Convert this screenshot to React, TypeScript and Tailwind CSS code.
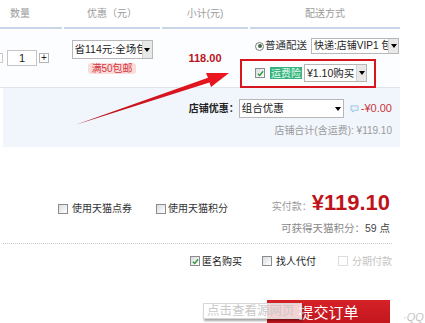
import React from "react";

// drop-down arrow on the right side of a select
function Caret({ plain }: { plain?: boolean }) {
  return (
    <span
      className={`flex w-[10px] shrink-0 items-center justify-center self-stretch ${
        plain ? "bg-white" : "border-l border-[#d2d2d2] bg-[#e8e8e8]"
      }`}
    >
      <span className="h-0 w-0 border-x-[3.5px] border-t-[4px] border-x-transparent border-t-black" />
    </span>
  );
}

function Select({ label, className, plain }: { label: string; className: string; plain?: boolean }) {
  return (
    <div className={`flex items-stretch border border-[#b7b7b7] bg-white ${className}`}>
      <span className="flex min-w-0 flex-1 items-center overflow-hidden whitespace-nowrap pl-[2px] leading-none text-[#222]">
        {label}
      </span>
      <Caret plain={plain} />
    </div>
  );
}

function Box({ checked, faded }: { checked?: boolean; faded?: boolean }) {
  return (
    <span
      className={`flex h-[10px] w-[10px] shrink-0 items-center justify-center border ${
        faded ? "border-[#dcdcdc] bg-white" : "border-[#8c8c8c] bg-linear-to-br from-[#d9dde2] to-white"
      }`}
    >
      {checked && (
        <svg viewBox="0 0 8 8" className="h-[7px] w-[7px]">
          <path d="M1 4.2 3.1 6.2 7 1.5" fill="none" stroke="#2f9a3c" strokeWidth="1.6" />
        </svg>
      )}
    </span>
  );
}

function Radio() {
  return (
    <span className="flex h-[9px] w-[9px] items-center justify-center rounded-full border border-[#7d7d7d] bg-white">
      <span className="h-[4px] w-[4px] rounded-full bg-[#3f6f3f]" />
    </span>
  );
}

export default function App() {
  return (
    <div className="relative h-[323px] w-[425px] overflow-hidden bg-white text-[10px] text-[#333] font-['Liberation_Sans','Noto_Sans_CJK_SC',sans-serif]">
      {/* column titles */}
      <div className="flex h-[29px] w-[400px] gap-[2px] text-[10px] text-[#9b9b9b]">
        <div className="flex w-[62px] items-center border-b-2 border-[#c9d6ea] pl-[10px]">数量</div>
        <div className="flex w-[96px] items-center justify-center border-b-2 border-[#c9d6ea]">优惠（元）</div>
        <div className="flex w-[86px] items-center justify-center border-b-2 border-[#c9d6ea]">小计(元)</div>
        <div className="flex w-[150px] items-center justify-center border-b-2 border-[#c9d6ea]">配送方式</div>
      </div>

      {/* item row */}
      <div className="relative flex h-[59px] w-[400px] gap-[2px] border-b border-[#dfe4ec] bg-[#fcfdff]">
        <div className="flex w-[62px] items-center">
          <span className="h-[10px] w-[3px] border border-l-0 border-[#c8c8c8] bg-white" />
          <span className="ml-[4px] flex h-[16px] w-[30px] items-center justify-center border border-[#c5c5c5] bg-white text-[11px] text-[#222]">
            1
          </span>
          <span className="ml-[2px] flex h-[10px] w-[10px] items-center justify-center border border-[#b5b5b5] bg-white text-[10px] leading-none text-[#222]">
            +
          </span>
        </div>

        <div className="flex w-[96px] flex-col items-center gap-[4px] pt-[11px]">
          <Select label="省114元:全场包" className="h-[19px] w-[81px] text-[10.5px]" />
          <span className="h-[11px] rounded-[3px] bg-[#fbdcdc] px-[3px] text-[10px] leading-[11px] text-[#d4373d]">
            满50包邮
          </span>
        </div>

        <div className="flex w-[86px] items-center justify-center text-[11px] font-bold text-[#b8141b]">118.00</div>

        <div className="flex w-[150px] flex-col gap-[10px] pl-[5px] pt-[9px]">
          <div className="flex h-[16px] items-center">
            <Radio />
            <span className="ml-[1px] text-[10.5px] text-[#333]">普通配送</span>
            <Select label="快递:店铺VIP1 包" className="ml-[4px] h-[16px] w-[88px] text-[10px]" />
          </div>
          <div className="flex h-[18px] items-center">
            <Box checked />
            <span className="ml-[5px] flex h-[12px] items-center bg-[#39b27f] px-[1px] text-[10px] text-[#e6fff0]">
              运费险
            </span>
            <Select label="¥1.10购买" className="ml-[2px] h-[18px] w-[63px] text-[10.5px]" />
          </div>
        </div>

        {/* red annotation frame */}
        <div className="absolute left-[240px] top-[30px] h-[29px] w-[136px] border-2 border-[#d7161d]" />
      </div>

      {/* shop discount */}
      <div className="ml-[3px] flex h-[59px] w-[397px] flex-col items-end bg-[#f1f5fc] pr-[8px] pt-[11px]">
        <div className="flex h-[19px] items-center">
          <span className="text-[10px] font-bold text-[#222]">店铺优惠：</span>
          <Select label="组合优惠" className="h-[19px] w-[105px] text-[10.5px]" plain />
          <svg viewBox="0 0 10 9" className="ml-[6px] h-[8px] w-[9px]">
            <path d="M1 1h8v5H5L3 8V6H1z" fill="#e6f1fb" stroke="#8fbbe3" strokeWidth="0.9" />
          </svg>
          <span className="ml-[2px] text-[11px] text-[#c9353a]">-¥0.00</span>
        </div>
        <div className="mt-[5px] text-[10px] text-[#9a9a9a]">店铺合计(含运费): ¥119.10</div>
      </div>

      {/* totals */}
      <div className="ml-[3px] mt-[45px] flex h-[52px] w-[389px] border-b border-dotted border-[#c9c9c9]">
        <div className="flex items-start pl-[55px] pt-[9px]">
          <div className="flex items-center">
            <Box />
            <span className="ml-[4px] text-[10px] text-[#333]">使用天猫点券</span>
          </div>
          <div className="ml-[24px] flex items-center">
            <Box />
            <span className="ml-[2px] text-[10px] text-[#333]">使用天猫积分</span>
          </div>
        </div>
        <div className="ml-auto flex flex-col items-end pr-[2px]">
          <div className="flex items-baseline">
            <span className="text-[10px] text-[#9a9a9a]">实付款：</span>
            <span className="text-[22px] font-bold leading-none text-[#c0141b]">¥119.10</span>
          </div>
          <div className="mt-[7px] text-[10.5px] text-[#888]">
            可获得天猫积分：<span className="text-[#444]">59 点</span>
          </div>
        </div>
      </div>

      {/* options */}
      <div className="mt-[11px] flex h-[12px] w-[392px] items-center justify-end text-[10px]">
        <Box checked />
        <span className="ml-[2px] text-[#222]">匿名购买</span>
        <span className="ml-[20px]">
          <Box />
        </span>
        <span className="ml-[4px] text-[#222]">找人代付</span>
        <span className="ml-[22px]">
          <Box faded />
        </span>
        <span className="ml-[4px] text-[#c4c4c4]">分期付款</span>
      </div>

      <div className="ml-[267px] mt-[33px] flex h-[30px] w-[123px] items-start justify-center bg-linear-to-b from-[#d62229] to-[#bd1219] pt-[2px] text-[15px] text-white">
        提交订单
      </div>

      {/* browser hover hint over the button */}
      <div className="absolute left-[203px] top-[303px] flex h-[16px] w-[99px] items-center border border-[#d8d8d8] bg-white/80 pl-[3px] text-[12.5px] text-[#c9c9c9] shadow-[1px_2px_2px_rgba(0,0,0,0.35)]">
        点击查看源网页
      </div>
      <div className="absolute left-[403px] top-[309px] text-[11px] italic text-[#c4c4c4]">·QQ</div>

      {/* red arrow annotation */}
      <svg className="pointer-events-none absolute left-0 top-0" width="425" height="323">
        <defs>
          <linearGradient id="ar" x1="0" y1="1" x2="1" y2="0">
            <stop offset="0" stopColor="#b3121a" />
            <stop offset="1" stopColor="#ee1620" />
          </linearGradient>
        </defs>
        <polygon points="75,125 209.5,82.5 211,87 229,73 206,73 208,77.8" fill="url(#ar)" />
      </svg>
    </div>
  );
}
